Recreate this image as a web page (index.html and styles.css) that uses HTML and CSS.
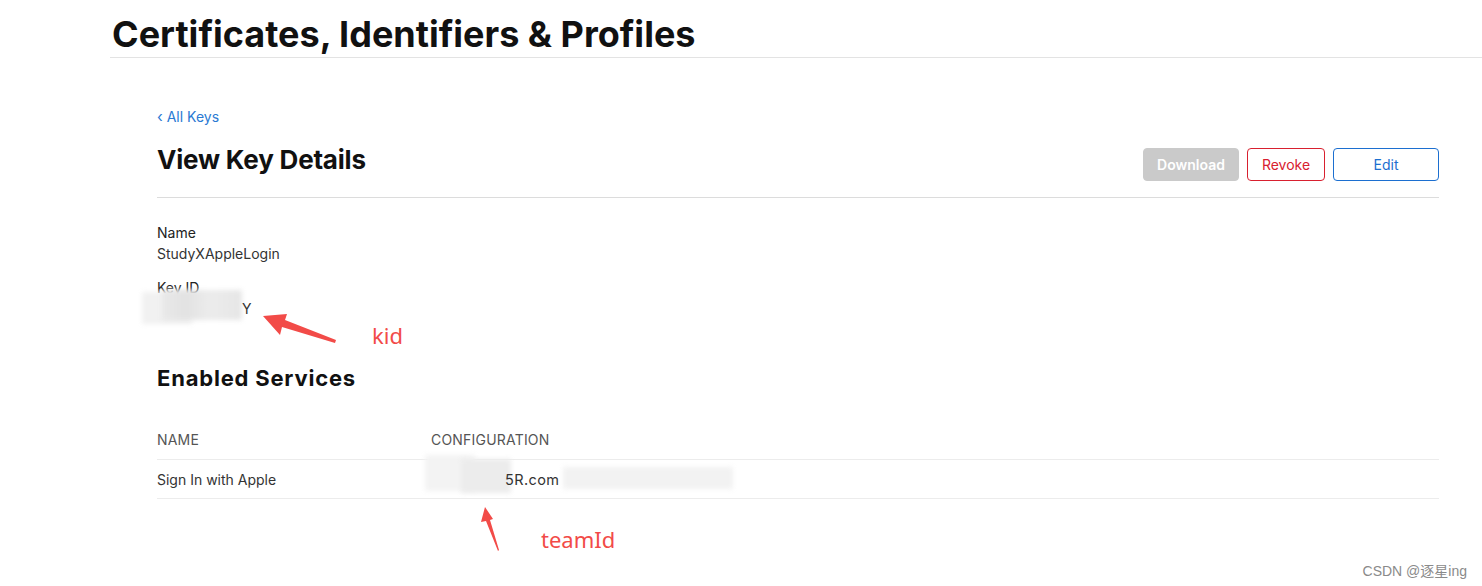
FILE: index.html
```html
<!DOCTYPE html>
<html lang="en">
<head>
<meta charset="utf-8">
<title>Certificates, Identifiers &amp; Profiles</title>
<link rel="stylesheet" href="styles.css">
</head>
<body>
<header class="site-header">
  <h1 class="site-title">Certificates, Identifiers &amp; Profiles</h1>
</header>
<main class="content">
  <a class="back-link" href="#"><span class="chev">‹</span> All Keys</a>
  <div class="page-head">
    <h2 class="page-title">View Key Details</h2>
    <div class="actions">
      <button class="btn btn-disabled">Download</button>
      <button class="btn btn-danger">Revoke</button>
      <button class="btn btn-primary">Edit</button>
    </div>
  </div>
  <section class="details">
    <div class="field">
      <div class="label">Name</div>
      <div class="value">StudyXAppleLogin</div>
    </div>
    <div class="field">
      <div class="label">Key ID</div>
      <div class="value keyid"><span class="smudge smudge-kid"></span><span class="smudge smudge-kid2"></span><span class="kid-tail">Y</span></div>
    </div>
  </section>
  <h3 class="section-title">Enabled Services</h3>
  <div class="table">
    <div class="row head">
      <div class="col-name">NAME</div>
      <div class="col-conf">CONFIGURATION</div>
    </div>
    <div class="row">
      <div class="col-name">Sign In with Apple</div>
      <div class="col-conf conf"><span class="smudge smudge-a"></span><span class="smudge smudge-a2"></span><span class="conf-text">5R.com</span><span class="smudge smudge-b"></span></div>
    </div>
  </div>
</main>
<div class="annot annot-kid">
  <svg width="90" height="40" viewBox="0 0 90 40"><path d="M9 8 L33 6 L31 12 L82 32 L81 35 L28 19 L26 27 Z" fill="#f24b48"/></svg>
  <span class="annot-text">kid</span>
</div>
<div class="annot annot-team">
  <svg width="24" height="50" viewBox="0 0 24 50"><path d="M5 3 L13 15 L10 16 L19 46 L18 47 L6 17 L1 18 Z" fill="#f24b48"/></svg>
  <span class="annot-text">teamId</span>
</div>
<div class="watermark">CSDN @逐星ing</div>
</body>
</html>
```

FILE: styles.css
```css
* { box-sizing: border-box; }
html, body { margin: 0; padding: 0; background: #fff; }
body {
  font-family: Inter, "Noto Sans", "Liberation Sans", sans-serif;
  color: #1d1d1f;
  width: 1482px;
  height: 586px;
  position: relative;
  overflow: hidden;
}
.site-header {
  margin-left: 110px;
  padding: 10px 0 0 2px;
  height: 58px;
  border-bottom: 1px solid #e3e3e3;
}
.site-title {
  margin: 0;
  font-size: 36px;
  line-height: 48px;
  font-weight: 700;
  letter-spacing: 0;
  color: #111;
}
.content {
  padding: 50px 43px 0 157px;
}
.back-link {
  display: block;
  font-size: 14px;
  line-height: 18px;
  color: #2a7ad3;
  text-decoration: none;
}
.back-link .chev { font-size: 15px; }
.page-head {
  display: flex;
  justify-content: space-between;
  align-items: flex-start;
  margin-top: 17px;
  padding-bottom: 16px;
  border-bottom: 1px solid #dcdcdc;
}
.page-title {
  margin: 0;
  font-size: 26px;
  line-height: 34px;
  font-weight: 700;
  color: #111;
  letter-spacing: -0.2px;
}
.actions { display: flex; gap: 8px; margin-top: 5px; }
.btn {
  height: 33px;
  font-family: inherit;
  font-size: 14px;
  border-radius: 4px;
  background: #fff;
  padding: 0;
  cursor: pointer;
}
.btn-disabled { width: 96px; background: #cacaca; border: 1px solid #cacaca; color: #fff; font-weight: 600; }
.btn-danger { width: 78px; border: 1px solid #d8202f; color: #d8202f; }
.btn-primary { width: 106px; border: 1px solid #1c6fd0; color: #1c6fd0; }
.details { padding-top: 24px; }
.field { margin-bottom: 13px; }
.label, .value { font-size: 14px; line-height: 21px; color: #333; }
.label { color: #222; }
.keyid { position: relative; height: 21px; }
.smudge {
  display: inline-block;
  background: #eeeeee;
  filter: blur(2.5px);
}
.smudge-kid {
  position: absolute;
  left: -15px; top: -6px;
  width: 50px; height: 32px;
  background: #f1f1f1;
}
.smudge-kid2 {
  position: absolute;
  left: 5px; top: -8px;
  width: 80px; height: 30px;
  background: linear-gradient(90deg, #e9e9e9 0, #e2e2e2 30%, #ececec 60%, #e6e6e6 100%);
}
.kid-tail { position: absolute; left: 85px; top: 0; }
.section-title {
  margin: 45px 0 0;
  font-size: 22px;
  line-height: 28px;
  font-weight: 700;
  letter-spacing: 0.8px;
  color: #111;
}
.table { margin-top: 38px; }
.row {
  display: flex;
  align-items: center;
  height: 39px;
  border-bottom: 1px solid #ececec;
  font-size: 14px;
  color: #333;
}
.row.head { height: 30px; line-height: 20px; align-items: flex-start; font-size: 14px; color: #555; letter-spacing: 0.2px; }
.col-name { width: 274px; }
.conf { position: relative; }
.conf-text { position: relative; margin-left: 74px; letter-spacing: 0.4px; font-size: 14.5px; }
.smudge-a {
  position: absolute; left: -6px; top: -16px;
  width: 50px; height: 36px;
  background: #f3f3f3;
}
.smudge-a2 {
  position: absolute; left: 30px; top: -12px;
  width: 50px; height: 34px;
  background: #ececec;
}
.smudge-b {
  position: absolute; left: 132px; top: -4px;
  width: 170px; height: 22px;
  background: #f2f2f2;
}
.annot { position: absolute; display: flex; }
.annot svg { display: block; }
.annot-text { font-family: "Noto Sans", "Liberation Sans", sans-serif; color: #f24b48; font-size: 22px; position: absolute; white-space: nowrap; }
.annot-kid { left: 254px; top: 308px; }
.annot-kid .annot-text { left: 118px; top: 12px; }
.annot-team { left: 480px; top: 504px; }
.annot-team .annot-text { left: 61px; top: 20px; }
.watermark {
  position: absolute;
  right: 15px;
  top: 560px;
  font-family: "Liberation Sans", "Noto Sans CJK SC", sans-serif;
  font-size: 14px;
  color: #8a8a8a;
}
```
